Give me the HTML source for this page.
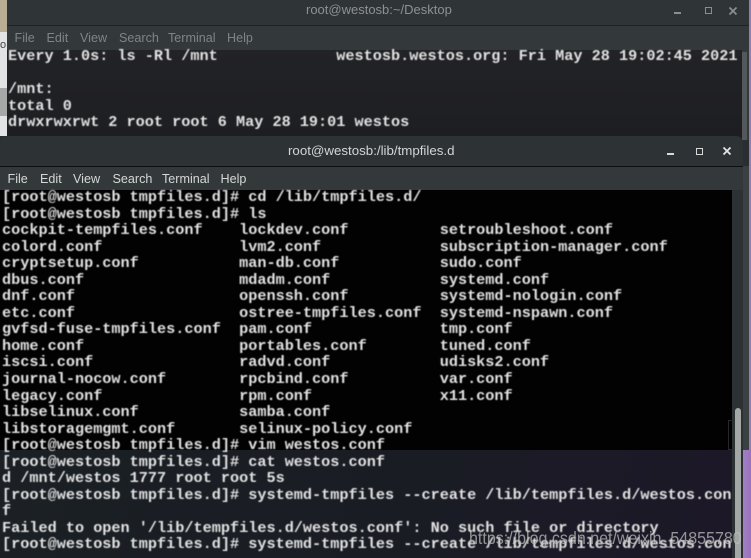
<!DOCTYPE html>
<html><head><meta charset="utf-8"><style>
html,body{margin:0;padding:0;background:#c9cdd2}
#r{position:relative;width:751px;height:558px;overflow:hidden;background:#2a2d31}
#r div{position:absolute}
.t{font:bold 15.2px/16.55px "Liberation Mono",monospace;color:#e2e2e2;white-space:pre;filter:blur(.4px);letter-spacing:.005px}
.m{font:12.6px/16px "Liberation Sans",sans-serif;white-space:pre;filter:blur(.35px)}
.m span{position:absolute;top:0}
.h{font:13px/16px "Liberation Sans",sans-serif;white-space:pre;filter:blur(.35px)}
</style></head><body><div id="r">
<div style="left:0;top:0;width:8px;height:32px;background:#b9ad93"></div>
<div style="left:0;top:32px;width:8px;height:104px;background:#e2e3e4"></div>
<div style="left:0;top:88px;width:8px;height:28px;background:#a6a8a8"></div>
<div style="left:0;top:39px;font:11px/12px 'Liberation Sans',sans-serif;color:#444">o</div>
<div style="left:749px;top:0;width:2px;height:450px;background:#8f7fb5"></div>
<div style="left:743px;top:450px;width:8px;height:108px;background:linear-gradient(90deg,#a27fc4,#9a72bd)"></div>

<div style="left:7px;top:0;width:742px;height:25px;background:#2f3437;border-bottom:1px solid #1f2224"></div>
<div style="left:7px;top:26px;width:742px;height:24px;background:#33393b"></div>
<div style="left:7px;top:50px;width:735px;height:90px;background:linear-gradient(180deg,#222327,#1d1e22)"></div>
<div style="left:742px;top:50px;width:7px;height:90px;background:#33393b"></div>
<div style="left:742px;top:52px;width:5px;height:88px;background:#53585a"></div>
<div class="h" style="left:306px;top:2px;color:#8d9192">root@westosb:~/Desktop</div>
<div class="m" style="left:0;top:30px;color:#7f8486"><span style="left:14.5px">File</span><span style="left:46.5px">Edit</span><span style="left:80px">View</span><span style="left:119px">Search</span><span style="left:168px">Terminal</span><span style="left:227px">Help</span></div>
<div style="left:674px;top:12px;width:7px;height:1.5px;background:#8a8e8f"></div>
<div style="left:705px;top:7px;width:5px;height:5px;border:1.5px solid #8a8e8f"></div>
<svg style="position:absolute;left:728px;top:6px" width="10" height="10"><path d="M1.5 1.5L8.5 8.5M8.5 1.5L1.5 8.5" stroke="#8a8e8f" stroke-width="1.8"/></svg>
<div class="t" style="left:8px;top:48px">Every 1.0s: ls -Rl /mnt             westosb.westos.org: Fri May 28 19:02:45 2021

/mnt:
total 0
drwxrwxrwt 2 root root 6 May 28 19:01 westos</div>

<div style="left:0;top:136px;width:743px;height:30px;background:#2d3235;border-radius:7px 7px 0 0;border-bottom:1px solid #0d0e0f"></div>
<div style="left:0;top:167px;width:743px;height:24px;background:#33393b"></div>
<div style="left:0;top:190px;width:732px;height:260px;background:#020203"></div>
<div style="left:0;top:450px;width:732px;height:108px;background:linear-gradient(100deg,#1a2024 0%,#1a1c24 55%,#1c1828 100%)"></div>
<div style="left:732px;top:190px;width:11px;height:368px;background:#2c3134"></div>
<div style="left:743px;top:166px;width:6px;height:284px;background:#3b4043"></div>
<div style="left:735px;top:408px;width:6px;height:150px;background:#a3a7a6;border-radius:3px 3px 0 0"></div>
<div style="left:728px;top:420px;width:4px;height:28px;border:1px solid #26282a;border-right:0"></div>
<div class="h" style="left:288px;top:143px;color:#d3d5d5;font-size:13.3px">root@westosb:/lib/tmpfiles.d</div>
<div class="m" style="left:0;top:171px;color:#d5d7d7"><span style="left:7.5px">File</span><span style="left:40px">Edit</span><span style="left:73px">View</span><span style="left:112.5px">Search</span><span style="left:162px">Terminal</span><span style="left:220.5px">Help</span></div>
<div style="left:667px;top:153px;width:7px;height:1.5px;background:#d8dada"></div>
<div style="left:696px;top:148px;width:5px;height:5px;border:1.5px solid #d8dada"></div>
<svg style="position:absolute;left:722px;top:146px" width="10" height="10"><path d="M1.5 1.5L8.5 8.5M8.5 1.5L1.5 8.5" stroke="#e2e4e4" stroke-width="1.8"/></svg>
<div class="t" style="left:2px;top:189px;width:730px;height:369px;overflow:hidden">[root@westosb tmpfiles.d]# cd /lib/tmpfiles.d/
[root@westosb tmpfiles.d]# ls
cockpit-tempfiles.conf    lockdev.conf          setroubleshoot.conf
colord.conf               lvm2.conf             subscription-manager.conf
cryptsetup.conf           man-db.conf           sudo.conf
dbus.conf                 mdadm.conf            systemd.conf
dnf.conf                  openssh.conf          systemd-nologin.conf
etc.conf                  ostree-tmpfiles.conf  systemd-nspawn.conf
gvfsd-fuse-tmpfiles.conf  pam.conf              tmp.conf
home.conf                 portables.conf        tuned.conf
iscsi.conf                radvd.conf            udisks2.conf
journal-nocow.conf        rpcbind.conf          var.conf
legacy.conf               rpm.conf              x11.conf
libselinux.conf           samba.conf
libstoragemgmt.conf       selinux-policy.conf
[root@westosb tmpfiles.d]# vim westos.conf
[root@westosb tmpfiles.d]# cat westos.conf
d /mnt/westos 1777 root root 5s
[root@westosb tmpfiles.d]# systemd-tmpfiles --create /lib/tempfiles.d/westos.con
f
Failed to open '/lib/tempfiles.d/westos.conf': No such file or directory
[root@westosb tmpfiles.d]# systemd-tmpfiles --create /lib/tempfiles.d/westos.conf</div>
<div style="left:469px;top:528px;font:17.5px/20px 'Liberation Sans',sans-serif;color:rgba(190,190,190,.75);white-space:pre;filter:blur(.3px);transform:scaleX(.916);transform-origin:0 0">https://blog.csdn.net/weixin_54855780</div>
</div></body></html>
